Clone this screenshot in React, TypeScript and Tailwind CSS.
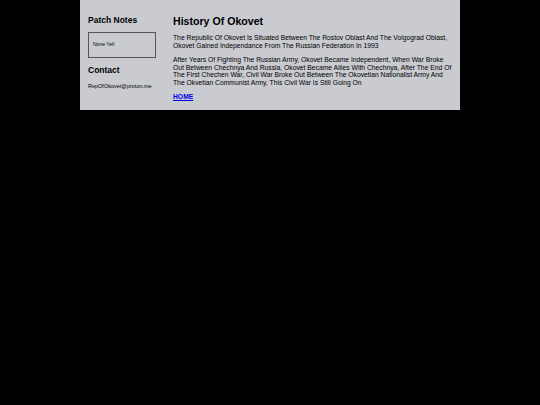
export default function App() {
  return (
    <div className="min-h-[405px] bg-black" style={{ fontFamily: '"Liberation Sans", Arial, sans-serif' }}>
      <div className="mx-auto flex w-[380px] bg-[#c9cbd0] px-2 pt-[14px] pb-[9px] text-black">
        {/* Sidebar */}
        <aside className="w-[68px] shrink-0">
          <h3 className="text-[8.5px] font-bold leading-[12px]">Patch Notes</h3>
          <div className="mt-[6px] flex h-[26px] items-center border border-[#555] px-[4px]">
            <span className="text-[5px]">None Yet!</span>
          </div>
          <h3 className="mt-[6px] text-[8.5px] font-bold leading-[12px]">Contact</h3>
          <p className="mt-[6.5px] text-[5.5px] leading-[7px]">RepOfOkovet@proton.me</p>
        </aside>

        {/* Main */}
        <main className="ml-[17px] flex-1 leading-[7.5px]">
          <h2 className="text-[10.6px] font-bold leading-[14px]">History Of Okovet</h2>
          <p className="mt-[6px] text-[6.75px] leading-[7.5px]">
            The Republic Of Okovet Is Situated Between The Rostov Oblast And The Volgograd Oblast, Okovet Gained Independance From The Russian Federation In 1993
          </p>
          <p className="mt-[7px] text-[6.75px] leading-[7.5px]">
            After Years Of Fighting The Russian Army, Okovet Became Independent, When War Broke Out Between Chechnya And Russia, Okovet Became Allies With Chechnya, After The End Of The First Chechen War, Civil War Broke Out Between The Okovetian Nationalist Army And The Okvetian Communist Army, This Civil War Is Still Going On
          </p>
          <a href="#" className="mt-[6.5px] block w-fit text-[6.75px] font-bold leading-[8px] text-[#0000ee] underline">
            HOME
          </a>
        </main>
      </div>
    </div>
  )
}
